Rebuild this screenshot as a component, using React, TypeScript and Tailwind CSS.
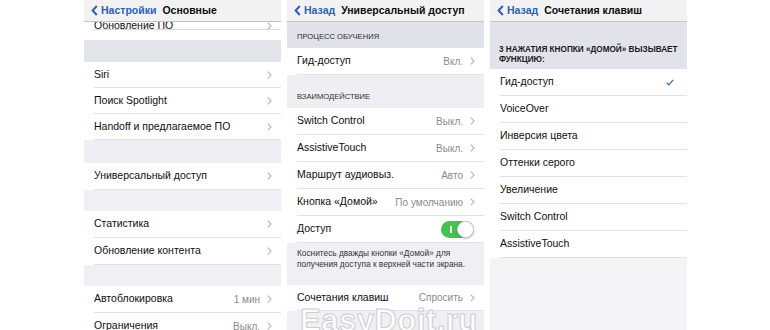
import type { ReactNode } from 'react';

const font = { fontFamily: '"Liberation Sans", Arial, sans-serif' };

function Chevron() {
  return (
    <svg width="5" height="8" viewBox="0 0 5 8" className="shrink-0">
      <path d="M0.8 0.7 L4 4 L0.8 7.3" fill="none" stroke="#b4b4ba" strokeWidth="1.1" />
    </svg>
  );
}

function BackChevron() {
  return (
    <svg width="7" height="11" viewBox="0 0 7 11" className="shrink-0">
      <path d="M5.8 1 L1.6 5.5 L5.8 10" fill="none" stroke="#2e5fb6" strokeWidth="2" />
    </svg>
  );
}

function Check() {
  return (
    <svg width="8" height="7" viewBox="0 0 8 7" className="shrink-0">
      <path d="M0.8 3.8 L2.9 5.9 L7.2 0.9" fill="none" stroke="#3a6fc4" strokeWidth="1.3" />
    </svg>
  );
}

function Header({ back, title }: { back: string; title: string }) {
  return (
    <div className="h-[22px] shrink-0 bg-[#f2f2f2] border-b border-[#c4c4c8] flex items-center pl-[7px] gap-[2px] text-[10.5px] font-bold">
      <BackChevron />
      <span className="text-[#2e5fb6] ml-[1px]">{back}</span>
      <span className="text-[#0d0d0d] ml-[4px]">{title}</span>
    </div>
  );
}

function Row({
  label,
  value,
  chevron = true,
  h = 'h-[27px]',
  right,
}: {
  label: string;
  value?: string;
  chevron?: boolean;
  h?: string;
  right?: ReactNode;
}) {
  return (
    <div className={`${h} shrink-0 bg-white pl-[10px]`}>
      <div className="h-full flex items-center pr-[9px] border-b border-[#e2e2e6]">
        <span className="text-[10.5px] text-[#0f0f0f] whitespace-nowrap">{label}</span>
        <div className="flex-1" />
        {value && <span className="text-[10px] text-[#8a8a8f] mr-[7px] whitespace-nowrap">{value}</span>}
        {right}
        {chevron && <Chevron />}
      </div>
    </div>
  );
}

function Toggle() {
  return (
    <div className="relative w-[33px] h-[17px] rounded-full bg-[#43c34c] mr-[1px]">
      <div className="absolute left-[9px] top-[5px] w-[1.5px] h-[7px] bg-white" />
      <div className="absolute right-0 top-0 w-[17px] h-[17px] rounded-full bg-white border border-[#d6d6d6] shadow-[0_1px_2px_rgba(0,0,0,0.25)]" />
    </div>
  );
}

export default function App() {
  return (
    <div className="relative w-[770px] h-[330px] overflow-hidden bg-white flex pl-[84px] gap-[6px]" style={font}>
      {/* Основные */}
      <div className="w-[197px] h-full flex flex-col bg-[#efeff3] overflow-hidden">
        <Header back="Настройки" title="Основные" />
        <div className="h-[18px] shrink-0 overflow-hidden bg-white pl-[10px]">
          <div className="h-full border-b border-[#d9d9de] pr-[9px]">
            <div className="-mt-[10px] h-[27px] flex items-center">
              <span className="text-[10.5px] text-[#0f0f0f]">Обновление ПО</span>
              <div className="flex-1" />
              <Chevron />
            </div>
          </div>
        </div>
        <div className="h-[22px] shrink-0 bg-[#e4e4eb]" />
        <Row label="Siri" h="h-[26px]" />
        <Row label="Поиск Spotlight" h="h-[26px]" />
        <Row label="Handoff и предлагаемое ПО" h="h-[26px]" />
        <div className="h-[23px] shrink-0 bg-[#efeff3]" />
        <Row label="Универсальный доступ" />
        <div className="h-[21px] shrink-0 bg-[#f0f0f4]" />
        <Row label="Статистика" />
        <Row label="Обновление контента" />
        <div className="h-[21px] shrink-0 bg-[#f0f0f4]" />
        <Row label="Автоблокировка" value="1 мин" />
        <Row label="Ограничения" value="Выкл." />
      </div>

      {/* Универсальный доступ */}
      <div className="w-[197px] h-full flex flex-col bg-[#f0f0f4] overflow-hidden">
        <Header back="Назад" title="Универсальный доступ" />
        <div className="h-[26px] shrink-0 bg-[#e1e1ea] flex items-end pl-[10px] pb-[6px] text-[7.6px] text-[#2e2e2e]">
          ПРОЦЕСС ОБУЧЕНИЯ
        </div>
        <Row label="Гид-доступ" value="Вкл." />
        <div className="h-[33px] shrink-0 bg-[#efeff3] flex items-end pl-[10px] pb-[6px] text-[7.6px] text-[#2e2e2e]">
          ВЗАИМОДЕЙСТВИЕ
        </div>
        <Row label="Switch Control" value="Выкл." />
        <Row label="AssistiveTouch" value="Выкл." />
        <Row label="Маршрут аудиовыз." value="Авто" />
        <Row label="Кнопка «Домой»" value="По умолчанию" />
        <Row label="Доступ" chevron={false} right={<Toggle />} />
        <div className="h-[42px] shrink-0 bg-[#f0f0f4] pl-[10px] pr-[8px] pt-[5px] text-[8.3px] leading-[11px] text-[#333]">
          Коснитесь дважды кнопки «Домой» для получения доступа к верхней части экрана.
        </div>
        <Row label="Сочетания клавиш" value="Спросить" h="h-[26px]" />
      </div>

      {/* Сочетания клавиш */}
      <div className="w-[197px] h-full flex flex-col bg-[#f4f4f6] overflow-hidden">
        <Header back="Назад" title="Сочетания клавиш" />
        <div className="h-[47px] shrink-0 bg-[#e2e2ea] flex items-end pl-[9px] pr-[4px] pb-[4px] text-[8.2px] leading-[10px] font-bold text-[#1a1a1a]">
          3 НАЖАТИЯ КНОПКИ «ДОМОЙ» ВЫЗЫВАЕТ ФУНКЦИЮ:
        </div>
        <Row label="Гид-доступ" chevron={false} right={<div className="mr-[4px]"><Check /></div>} />
        <Row label="VoiceOver" chevron={false} />
        <Row label="Инверсия цвета" chevron={false} />
        <Row label="Оттенки серого" chevron={false} />
        <Row label="Увеличение" chevron={false} />
        <Row label="Switch Control" chevron={false} />
        <Row label="AssistiveTouch" chevron={false} />
      </div>

      {/* watermark */}
      <div className="absolute left-[300px] top-[305px] text-[31px] font-bold leading-none text-white/85 tracking-[0.5px] [-webkit-text-stroke:1px_#cdcdd2]">
        EasyDoit.ru
      </div>
    </div>
  );
}
